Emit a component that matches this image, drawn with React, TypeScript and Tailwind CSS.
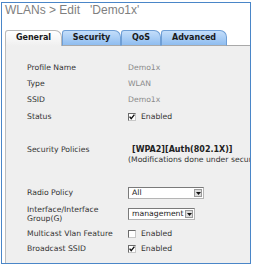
const body = "font-['DejaVu_Sans',Verdana,sans-serif] text-[7.7px]"

function CheckBox({ on }: { on: boolean }) {
  return (
    <span className="w-[8px] h-[8px] shrink-0 border border-[#6b6b6b] border-b-[#c8c8c8] border-r-[#c8c8c8] bg-white flex items-center justify-center">
      {on && (
        <svg width="6" height="6" viewBox="0 0 6 6">
          <path d="M0.6 2.6 L2.2 4.6 L5.4 0.6" stroke="#111" strokeWidth="1.4" fill="none" />
        </svg>
      )}
    </span>
  )
}

function Select({ value, width }: { value: string; width: string }) {
  return (
    <div
      className={`${width} h-[12px] border border-[#7a7a7a] border-b-[#b5b5b5] border-r-[#b5b5b5] bg-white flex items-center justify-between pl-[3px] pr-[1px] text-[#222]`}
    >
      <span className="leading-none">{value}</span>
      <span className="w-[8px] h-[8px] bg-[#dcdcdc] border border-[#9a9a9a] flex items-center justify-center">
        <svg width="5" height="3" viewBox="0 0 5 3">
          <path d="M0 0H5L2.5 3Z" fill="#111" />
        </svg>
      </span>
    </div>
  )
}

const tabs = [
  { name: "General", width: "w-[57px]", active: true },
  { name: "Security", width: "w-[59px]", active: false },
  { name: "QoS", width: "w-[40px]", active: false },
  { name: "Advanced", width: "w-[66px]", active: false },
]

export default function App() {
  return (
    <div className="w-[253px] h-[266px] bg-white overflow-hidden">
      <div className="ml-[1px] mt-[2px] w-[250px] h-[262px] border border-[#4a86c8] flex flex-col overflow-hidden">
        {/* Title */}
        <div className="pl-[3px] h-[14px] leading-[14px] text-[12px] text-[#7f7f7f] font-['Liberation_Sans',Arial,sans-serif] whitespace-pre">
          WLANs &gt; Edit   'Demo1x'
        </div>

        {/* Tabs */}
        <div className="mt-[13px] pl-[3px] flex items-end h-[16px]">
          {tabs.map((t) =>
            t.active ? (
              <div
                key={t.name}
                className={`${t.width} h-[16px] shrink-0 border-t border-l border-r border-[#b9b9b9] rounded-tl-[3px] rounded-tr-[7px] bg-gradient-to-b from-white to-[#efefef] flex items-center justify-center font-['DejaVu_Sans',Verdana,sans-serif] font-bold text-[8px] text-[#1a1a1a] pb-[1px]`}
              >
                {t.name}
              </div>
            ) : (
              <div
                key={t.name}
                className={`${t.width} h-[16px] shrink-0 border border-[#6f9fd6] border-b-[#a9a9a9] rounded-tl-[3px] rounded-tr-[7px] bg-gradient-to-b from-[#c4defa] to-[#8fbdf0] flex items-center justify-center font-['DejaVu_Sans',Verdana,sans-serif] font-bold text-[8px] text-[#1a1a1a]`}
              >
                {t.name}
              </div>
            )
          )}
          <div className="flex-1 h-[16px] border-b border-[#a9a9a9]" />
        </div>

        {/* Panel */}
        <div className={`flex-1 ml-[3px] border-l border-[#bdbdbd] bg-[#efefef] pt-[14px] pl-[21px] text-[#333] overflow-hidden whitespace-nowrap ${body}`}>
          <div className="flex items-center h-[16px]">
            <span className="w-[101px]">Profile Name</span>
            <span className="text-[#8a8a8a]">Demo1x</span>
          </div>
          <div className="flex items-center h-[16px]">
            <span className="w-[101px]">Type</span>
            <span className="text-[#8a8a8a]">WLAN</span>
          </div>
          <div className="flex items-center h-[16px]">
            <span className="w-[101px]">SSID</span>
            <span className="text-[#8a8a8a]">Demo1x</span>
          </div>
          <div className="flex items-center h-[17px]">
            <span className="w-[101px]">Status</span>
            <CheckBox on />
            <span className="ml-[5px]">Enabled</span>
          </div>

          <div className="mt-[20px] flex">
            <span className="w-[101px] shrink-0 h-[10px] leading-[10px]">Security Policies</span>
            <div className="flex flex-col leading-[10px]">
              <span className="ml-[4px] font-bold text-[8px] text-[#222]">[WPA2][Auth(802.1X)]</span>
              <span>(Modifications done under security tab will appear after applying the changes.)</span>
            </div>
          </div>

          <div className="mt-[20px] flex items-center h-[16px]">
            <span className="w-[101px]">Radio Policy</span>
            <Select value="All" width="w-[76px]" />
          </div>
          <div className="mt-[4px] flex items-center h-[18px]">
            <span className="w-[101px] leading-[9px] whitespace-normal">
              Interface/Interface
              <br />
              Group(G)
            </span>
            <Select value="management" width="w-[67px]" />
          </div>
          <div className="mt-[3px] flex items-center h-[15px]">
            <span className="w-[101px]">Multicast Vlan Feature</span>
            <CheckBox on={false} />
            <span className="ml-[5px]">Enabled</span>
          </div>
          <div className="flex items-center h-[16px]">
            <span className="w-[101px]">Broadcast SSID</span>
            <CheckBox on />
            <span className="ml-[5px]">Enabled</span>
          </div>
        </div>
      </div>
    </div>
  )
}
